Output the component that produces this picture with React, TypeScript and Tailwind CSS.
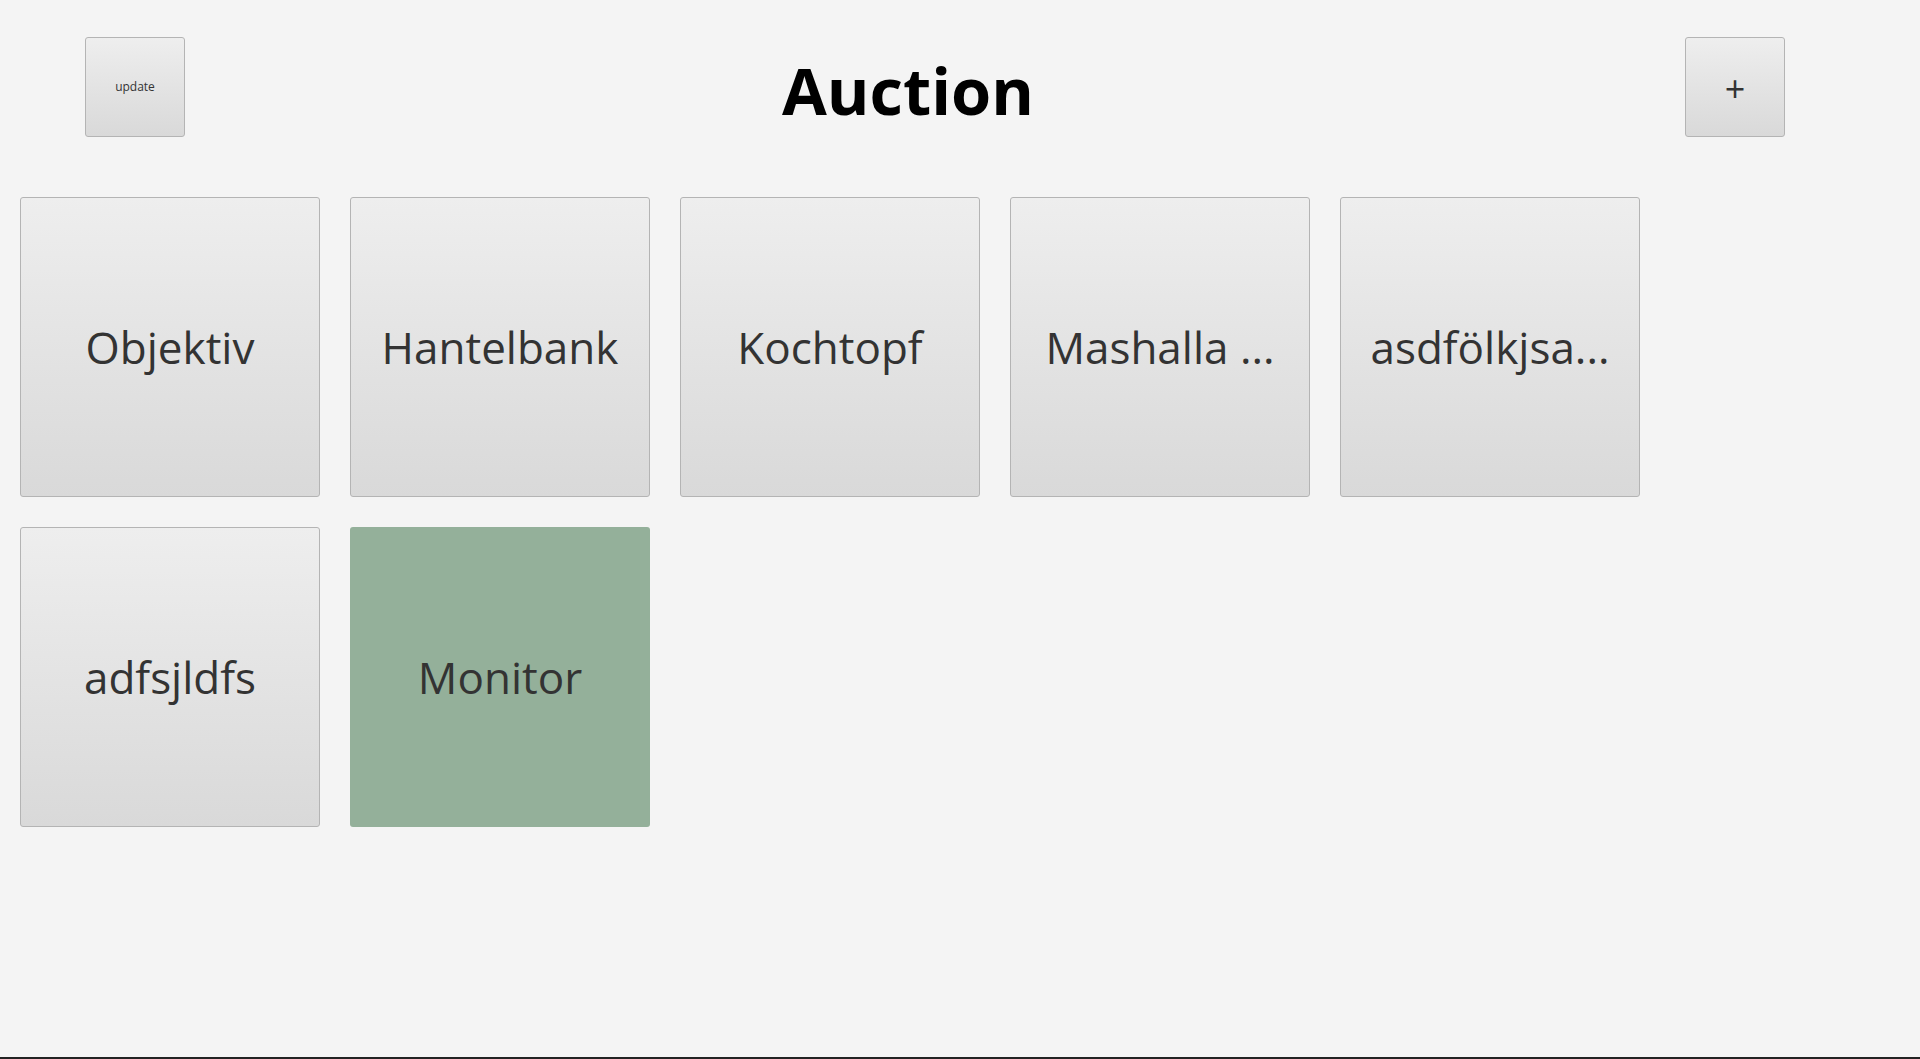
import React from "react";

const items = [
  "Objektiv",
  "Hantelbank",
  "Kochtopf",
  "Mashalla ...",
  "asdfölkjsa...",
  "adfsjldfs",
];

function Card({ label, green }: { label: string; green?: boolean }) {
  return (
    <div
      className={
        green
          ? "w-[300px] h-[300px] flex items-center justify-center rounded-[3px] bg-[#94b09a]"
          : "w-[300px] h-[300px] flex items-center justify-center rounded-[3px] border border-[#b4b4b4] bg-gradient-to-b from-[#eeeeee] to-[#d9d9d9]"
      }
    >
      <span className="text-[44px] text-[#333333] leading-none whitespace-nowrap">{label}</span>
    </div>
  );
}

export default function App() {
  return (
    <div
      className="w-[1920px] h-[1059px] bg-[#f4f4f4] flex flex-col overflow-hidden"
      style={{ fontFamily: '"Open Sans", "Noto Sans", sans-serif' }}
    >
      <div className="flex items-start pt-[37px] pl-[85px]">
        <button className="w-[100px] h-[100px] flex items-center justify-center rounded-[3px] border border-[#b4b4b4] bg-gradient-to-b from-[#eeeeee] to-[#d9d9d9] text-[12px] text-[#333333]">
          update
        </button>
        <div className="ml-[597px] mt-[21px] text-[65px] font-bold leading-none text-black">Auction</div>
        <div className="flex-1" />
        <button className="mr-[135px] w-[100px] h-[100px] flex items-center justify-center rounded-[3px] border border-[#b4b4b4] bg-gradient-to-b from-[#eeeeee] to-[#d9d9d9] text-[36px] leading-none text-[#333333] pt-[4px]">
          +
        </button>
      </div>
      <div className="flex flex-wrap gap-[30px] pl-[20px] mt-[60px] w-[1670px]">
        {items.map((l) => (
          <Card key={l} label={l} />
        ))}
        <Card label="Monitor" green />
      </div>
      <div className="flex-1" />
      <div className="h-[2px] bg-[#222222]" />
    </div>
  );
}
